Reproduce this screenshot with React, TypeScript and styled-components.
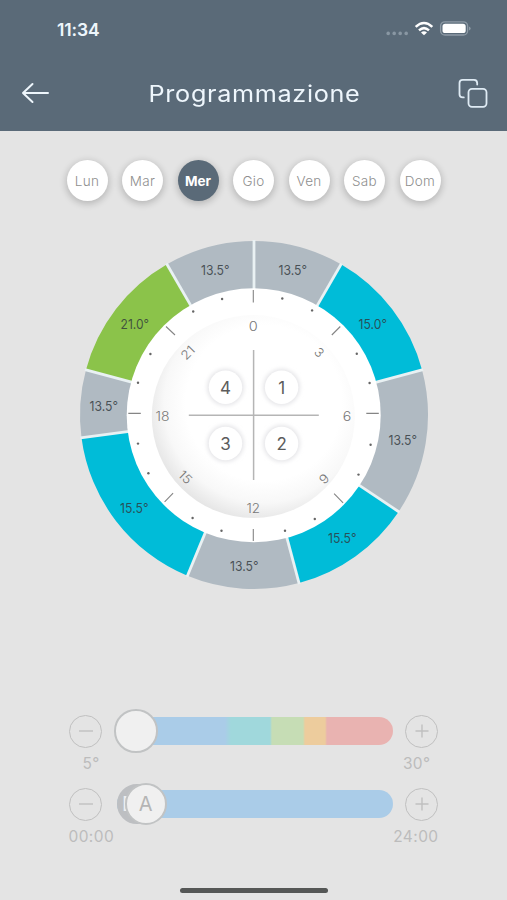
import React from "react";
import styled, { createGlobalStyle } from "styled-components";

const Global = createGlobalStyle`
  * { box-sizing: border-box; }
  body { margin: 0; background: #e4e4e4; font-family: Inter, "Open Sans", sans-serif; }
`;

const Screen = styled.div`
  width: 507px;
  height: 900px;
  display: flex;
  flex-direction: column;
  align-items: center;
  overflow: hidden;
  background: #e4e4e4;
`;

const Header = styled.header`
  width: 100%;
  height: 131px;
  flex: none;
  background: #5a6a78;
  color: #eef6fc;
`;

const StatusBar = styled.div`
  height: 58px;
  padding: 0 36px 0 57px;
  display: flex;
  align-items: center;
  justify-content: space-between;
`;

const Clock = styled.span`
  font-size: 17.5px;
  font-weight: 600;
  letter-spacing: -0.1px;
  line-height: 20px;
  padding-top: 1px;
`;

const NavBar = styled.div`
  height: 73px;
  padding: 0 18px 3px 20px;
  display: grid;
  grid-template-columns: 32px 1fr 32px;
  align-items: center;
`;

const Title = styled.h1`
  margin: 0;
  padding: 2px 0 0;
  text-align: center;
  font-size: 22.5px;
  font-weight: 400;
  letter-spacing: 0.6px;
  line-height: 30px;
  white-space: nowrap;
  transform: scaleX(1.12);
`;

const Icon = styled.svg`
  display: block;
  overflow: visible;
`;

const Days = styled.nav`
  margin-top: 29px;
  display: grid;
  grid-template-columns: repeat(7, 55.5px);
  justify-items: center;
`;

const Day = styled.button<{ $active?: boolean }>`
  width: 41px;
  height: 41px;
  padding: 0;
  border: 0;
  border-radius: 50%;
  font: ${(p) => (p.$active ? 700 : 300)} 13.5px/42px Inter, sans-serif;
  letter-spacing: ${(p) => (p.$active ? "0" : "0.3px")};
  color: ${(p) => (p.$active ? "#fff" : "#8f8f8f")};
  background: ${(p) => (p.$active ? "#5a6a78" : "#fff")};
  box-shadow: 0 2px 7px 1px rgba(0, 0, 0, 0.2);
`;

const Dial = styled.svg`
  display: block;
  flex: none;
  margin-top: 34px;
  font-family: Inter, sans-serif;
`;

const Controls = styled.section`
  margin-top: 113px;
  width: 370px;
  display: flex;
  flex-direction: column;
`;

const Row = styled.div`
  height: 46px;
  display: grid;
  grid-template-columns: 34px 276px 34px;
  justify-content: space-between;
  align-items: center;
  justify-items: center;
`;

const Round = styled.button`
  width: 33px;
  height: 33px;
  padding: 0;
  border: 1.4px solid #c0c0c0;
  border-radius: 50%;
  background: transparent;
  display: grid;
  place-items: center;
`;

const Track = styled.div<{ $fill: string }>`
  width: 100%;
  height: 27.5px;
  margin: 0 -1px 0 1px;
  border-radius: 14px;
  background: ${(p) => p.$fill};
  display: flex;
  align-items: center;
`;

const Thumb = styled.div<{ $back?: boolean; $size: number; $shift: number }>`
  flex: none;
  width: ${(p) => p.$size}px;
  height: ${(p) => p.$size}px;
  margin-left: ${(p) => p.$shift}px;
  border-radius: 50%;
  border: 2px solid ${(p) => (p.$back ? "#bdbfc2" : "#c1c3c4")};
  background: ${(p) => (p.$back ? "#bdbfc2" : "#f0f0f0")};
  color: ${(p) => (p.$back ? "#eeeeee" : "#b5b5b5")};
  padding-left: ${(p) => (p.$back ? "3.5px" : "0")};
  z-index: ${(p) => (p.$back ? 0 : 1)};
  display: grid;
  align-items: center;
  justify-items: ${(p) => (p.$back ? "start" : "center")};
  font-size: 20px;
  line-height: 20px;
`;

const Limits = styled.div<{ $inset: string }>`
  height: 27px;
  padding: ${(p) => p.$inset};
  display: flex;
  justify-content: space-between;
  font-size: 15.5px;
  line-height: 20px;
  letter-spacing: 0.4px;
  color: #bcbcbc;
`;

const HomeBar = styled.div`
  margin: auto 0 7px;
  width: 148px;
  height: 5px;
  border-radius: 3px;
  background: #555756;
`;

const GREY = "#b0bac2";
const CYAN = "#00bcd8";
const GREEN = "#8bc34a";

type Slice = { from: number; to: number; fill: string; label: string; x: number; y: number };

const slices: Slice[] = [
  { from: 0, to: 30, fill: GREY, label: "13.5°", x: 293, y: 270.5 },
  { from: 30, to: 75, fill: CYAN, label: "15.0°", x: 373, y: 324 },
  { from: 75, to: 123.75, fill: GREY, label: "13.5°", x: 403, y: 440 },
  { from: 123.75, to: 165, fill: CYAN, label: "15.5°", x: 342.5, y: 538 },
  { from: 165, to: 202.5, fill: GREY, label: "13.5°", x: 244.5, y: 566 },
  { from: 202.5, to: 262.5, fill: CYAN, label: "15.5°", x: 134.5, y: 508 },
  { from: 262.5, to: 285, fill: GREY, label: "13.5°", x: 104, y: 406 },
  { from: 285, to: 330, fill: GREEN, label: "21.0°", x: 135, y: 324 },
  { from: 330, to: 360, fill: GREY, label: "13.5°", x: 215.5, y: 270.5 },
];

const CX = 254.2;
const CY = 415;

const polar = (r: number, deg: number) => {
  const a = (deg * Math.PI) / 180;
  return [CX + r * Math.sin(a), CY - r * Math.cos(a)];
};

const arc = ({ from, to }: Slice) => {
  const [a, b] = polar(174, from);
  const [c, d] = polar(174, to);
  const [e, f] = polar(120, to);
  const [g, h] = polar(120, from);
  return `M${a} ${b}A174 174 0 0 1 ${c} ${d}L${e} ${f}A120 120 0 0 0 ${g} ${h}Z`;
};

const dots = [
  [282.5, 298.5], [312.3, 310.4], [357, 353.8], [369.8, 383],
  [370.8, 444.8], [358.7, 474.6], [315, 519], [285.2, 530.7],
  [221.7, 530.7], [192.8, 518], [148.6, 473.2], [138.2, 443.6],
  [138.2, 382.8], [150.6, 354], [193.4, 311.5], [222.3, 299],
];

const ticks =
  "M253.5 290V302.5M340.5 326.5L332 335M366.5 413.4H379M334.3 493.7L343.3 502.8M253.5 529V541M173.3 493.2L164.8 501.8M128.5 413.4H141M166.2 326.5L175.2 335";

const hours = [
  { t: "0", x: 253.5, y: 326.5, r: 0, w: 9 },
  { t: "3", x: 319.5, y: 352.3, r: 45, w: 8 },
  { t: "6", x: 347.3, y: 416.5, r: 0, w: 8.5 },
  { t: "9", x: 324.3, y: 478.8, r: -45, w: 8.5 },
  { t: "12", x: 253.5, y: 508.5, r: 0, w: 13.5 },
  { t: "15", x: 185.5, y: 477, r: 45, w: 13.5 },
  { t: "18", x: 162.8, y: 416.8, r: 0, w: 14 },
  { t: "21", x: 188, y: 352.7, r: -45, w: 14 },
];

const presets = [
  { t: "4", x: 225.7, y: 387.3 },
  { t: "1", x: 281.8, y: 387.3 },
  { t: "3", x: 225.7, y: 443.5 },
  { t: "2", x: 281.8, y: 443.5 },
];

const BackArrow = () => (
  <Icon width="32" height="32" fill="none" stroke="#eef6fc" strokeWidth="2" strokeLinecap="round" strokeLinejoin="round">
    <path d="M28 16H3M12.5 7L3 16L12.5 25" />
  </Icon>
);

const CopyIcon = () => (
  <Icon width="32" height="32" fill="none" stroke="#dfebf4" strokeWidth="1.8" strokeLinecap="round">
    <rect x="11.5" y="11.8" width="18" height="18" rx="3.5" />
    <path d="M20.2 7.5V6.2Q20.2 2.8 17 2.8H5.7Q2.5 2.8 2.5 6V17.2Q2.5 20.4 5.7 20.4H6.8" />
  </Icon>
);

const StatusIcons = () => (
  <Icon width="85" height="20" fill="none">
    <g fill="#8997a3">
      <circle cx="2.2" cy="14.4" r="1.8" /><circle cx="8.2" cy="14.4" r="1.8" />
      <circle cx="14.2" cy="14.4" r="1.8" /><circle cx="20.2" cy="14.4" r="1.8" />
    </g>
    <g stroke="#fff" strokeWidth="2.5">
      <path d="M29.7 7.9Q38 .2 46.3 7.9" /><path d="M33 11.4Q38 6.9 43 11.4" />
    </g>
    <path d="M35 13.5Q38 11.2 41 13.5L38 16.3Z" fill="#fff" />
    <rect x="54.6" y="2.8" width="27" height="13.2" rx="4.3" stroke="#8e9ba6" strokeWidth="1.3" />
    <rect x="56.5" y="4.7" width="23.2" height="9.4" rx="2.7" fill="#fff" />
    <path d="M83 7.4Q86.5 9.4 83 11.4Z" fill="#8e9ba6" />
  </Icon>
);

const Sign = ({ plus }: { plus?: boolean }) => (
  <Icon width="14" height="14" stroke="#c0c0c0" strokeWidth="1.4">
    <path d={plus ? "M.5 7H13.5M7 .5V13.5" : "M0 7H14"} />
  </Icon>
);

const WEEK = ["Lun", "Mar", "Mer", "Gio", "Ven", "Sab", "Dom"];

const TEMPERATURES =
  "linear-gradient(90deg, #aacce8 0 108px, #a0d8dc 114px 153px, #c6ddb5 155px 186px, #edcc9d 188px 208px, #e9b3b1 210px)";

export default function App() {
  return (
    <Screen>
      <Global />
      <Header>
        <StatusBar>
          <Clock>11:34</Clock>
          <StatusIcons />
        </StatusBar>
        <NavBar>
          <BackArrow />
          <Title>Programmazione</Title>
          <CopyIcon />
        </NavBar>
      </Header>

      <Days>
        {WEEK.map((d) => (
          <Day key={d} $active={d === "Mer"}>{d}</Day>
        ))}
      </Days>

      <Dial width="360" height="360" viewBox="74.2 235 360 360" textAnchor="middle">
        <defs>
          <radialGradient id="bowl" gradientUnits="userSpaceOnUse" cx="264" cy="403" r="120">
            <stop offset="0.65" stopColor="#fff" />
            <stop offset="0.83" stopColor="#f8f8f8" />
            <stop offset="1" stopColor="#e4e4e4" />
          </radialGradient>
          <filter id="soft" x="-30%" y="-30%" width="160%" height="160%">
            <feGaussianBlur stdDeviation="2" />
          </filter>
        </defs>
        {slices.map((s) => (
          <path key={s.from} d={arc(s)} fill={s.fill} />
        ))}
        {slices.map((s) => {
          const [x1, y1] = polar(120, s.from);
          const [x2, y2] = polar(175, s.from);
          return <line key={s.from} x1={x1} y1={y1} x2={x2} y2={y2} stroke="#e9f1f3" strokeWidth="2.8" />;
        })}
        <circle cx={CX - 0.3} cy={CY + 0.3} r="127" fill="#fff" />
        <circle cx="253.5" cy="416.5" r="101.5" fill="url(#bowl)" />
        <path d={ticks} stroke="#858585" strokeWidth="1.1" />
        {dots.map(([x, y]) => (
          <circle key={`${x}-${y}`} cx={x} cy={y} r="1.2" fill="#666" />
        ))}
        <path d="M189 415.2H319M253.8 350V480" stroke="#b5b5b5" strokeWidth="1.5" />
        {hours.map((h) => (
          <text
            key={h.t}
            transform={`translate(${h.x} ${h.y}) rotate(${h.r})`}
            y="4.5"
            fontSize="12.5"
            fontWeight="300"
            fill="#777"
            textLength={h.w}
            lengthAdjust="spacingAndGlyphs"
          >
            {h.t}
          </text>
        ))}
        {presets.map((p) => (
          <g key={p.t}>
            <circle cx={p.x} cy={p.y} r="18.3" fill="#e4e4e7" filter="url(#soft)" />
            <circle cx={p.x} cy={p.y} r="16.7" fill="#fff" />
            <text x={p.x} y={p.y + 6.3} fontSize="17" fontWeight="400" fill="#5c5c5c">{p.t}</text>
          </g>
        ))}
        {slices.map((s) => (
          <text
            key={s.from}
            x={s.x}
            y={s.y + 4.8}
            fontSize="13.5"
            fill="#30383c"
            fillOpacity="0.82"
            textLength="28.5"
            lengthAdjust="spacingAndGlyphs"
          >
            {s.label}
          </text>
        ))}
      </Dial>

      <Controls>
        <Row>
          <Round aria-label="Meno"><Sign /></Round>
          <Track $fill={TEMPERATURES}>
            <Thumb $size={43.5} $shift={-2.5} />
          </Track>
          <Round aria-label="Più"><Sign plus /></Round>
        </Row>
        <Limits $inset="0 8px 0 14px">
          <span>5°</span>
          <span>30°</span>
        </Limits>
        <Row>
          <Round aria-label="Meno"><Sign /></Round>
          <Track $fill="#aacce8">
            <Thumb $back $size={40} $shift={0}>D</Thumb>
            <Thumb $size={42.5} $shift={-32}>A</Thumb>
          </Track>
          <Round aria-label="Più"><Sign plus /></Round>
        </Row>
        <Limits $inset="0">
          <span>00:00</span>
          <span>24:00</span>
        </Limits>
      </Controls>
      <HomeBar />
    </Screen>
  );
}
